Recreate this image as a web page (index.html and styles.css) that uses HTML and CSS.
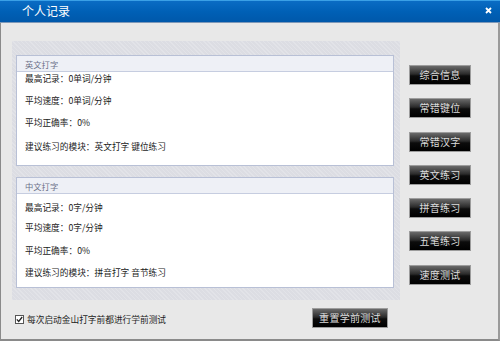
FILE: index.html
```html
<!doctype html>
<html lang="zh">
<head>
  <meta charset="utf-8">
  <title>个人记录</title>
  <link rel="stylesheet" href="styles.css">
</head>
<body>
  <div class="window">
    <div class="titlebar">
      <span class="title">个人记录</span>
      <span class="close">
        <svg width="7" height="7" viewBox="0 0 7 7"><path d="M1 1L6 6M6 1L1 6" stroke="#fff" stroke-width="1.8"/></svg>
      </span>
    </div>

    <div class="content">
      <div class="main">
        <div class="panel">
          <div class="group en">
            <div class="group-head">英文打字</div>
            <div class="group-body">
              <p>最高记录：0单词/分钟</p>
              <p>平均速度：0单词/分钟</p>
              <p>平均正确率：0%</p>
              <p>建议练习的模块：英文打字 键位练习</p>
            </div>
          </div>
          <div class="group cn">
            <div class="group-head">中文打字</div>
            <div class="group-body">
              <p>最高记录：0字/分钟</p>
              <p>平均速度：0字/分钟</p>
              <p>平均正确率：0%</p>
              <p>建议练习的模块：拼音打字 音节练习</p>
            </div>
          </div>
        </div>

        <div class="side">
          <button class="btn">综合信息</button>
          <button class="btn">常错键位</button>
          <button class="btn">常错汉字</button>
          <button class="btn">英文练习</button>
          <button class="btn">拼音练习</button>
          <button class="btn">五笔练习</button>
          <button class="btn">速度测试</button>
        </div>
      </div>

      <div class="footer">
        <label class="check">
          <span class="box">
            <svg width="7" height="7" viewBox="0 0 7 7"><path d="M0.8 3.4L2.7 5.4L6.2 1" fill="none" stroke="#222" stroke-width="1.3"/></svg>
          </span>
          每次启动金山打字前都进行学前测试
        </label>
        <button class="btn wide">重置学前测试</button>
      </div>
    </div>
  </div>
</body>
</html>
```

FILE: styles.css
```css
body {
  margin: 0;
  font-family: "Noto Sans CJK SC", "DejaVu Sans", sans-serif;
  background-color: #e8e8e8;
}
.window {
  width: 500px;
  height: 341px;
  box-sizing: border-box;
  border-left: 1px solid #8a8a8a;
  border-right: 2px solid #9a9a9a;
  border-bottom: 2px solid #8a8a8a;
  background-color: #e8e8e8;
  display: flex;
  flex-direction: column;
}
.titlebar {
  height: 23px;
  box-sizing: border-box;
  margin: 0 -2px 0 -1px;
  border-top: 1px solid #3aa0e6;
  border-bottom: 1px solid #7d98b8;
  background: linear-gradient(#0a6cc4, #0060b6 50%, #0058aa);
  display: flex;
  align-items: center;
  justify-content: space-between;
  padding: 0 8px 1px 22px;
}
.title {
  color: #fff;
  font-size: 12px;
  line-height: 14px;
}
.close {
  display: flex;
  margin-top: -1px;
}
.content {
  flex: 1;
  display: flex;
  flex-direction: column;
  padding: 18px 0 0 11px;
}
.main {
  display: flex;
  align-items: flex-start;
}
.panel {
  width: 388px;
  height: 259px;
  box-sizing: border-box;
  padding: 14px 6px 0 4px;
  background-color: #dcdde3;
  background-image: repeating-linear-gradient(45deg, rgba(255,255,255,0.18) 0 1px, transparent 1px 3px);
  display: flex;
  flex-direction: column;
  gap: 11px;
}
.group {
  height: 111px;
  box-sizing: border-box;
  border: 1px solid #b8c0d6;
  background-color: #fff;
}
.group-head {
  height: 16px;
  box-sizing: border-box;
  border-bottom: 1px solid #c6cde0;
  background-color: #eef0f6;
  color: #6b7088;
  font-size: 8.3px;
  line-height: 16px;
  padding-left: 8px;
}
.group-body {
  padding: 0 0 0 8px;
}
.group p {
  margin: 0 0 11px;
  font-size: 8.7px;
  line-height: 11px;
  color: #1a1a1a;
}
.en .group-body {
  padding-top: 1px;
}
.en p:nth-child(4) {
  margin-top: 13px;
}
.cn .group-body {
  padding-top: 8px;
}
.cn p:nth-child(2) {
  margin-top: -2px;
}
.cn p:nth-child(3) {
  margin-top: 12px;
}
.side {
  display: flex;
  flex-direction: column;
  gap: 13.3px;
  margin: 24px 0 0 9px;
}
.btn {
  width: 62px;
  height: 20px;
  box-sizing: border-box;
  padding: 0;
  border: 1px solid #9c9c9c;
  background: linear-gradient(#6a6a6a, #2a2a2a 45%, #0c0c0c 55%, #000);
  color: #dcdcdc;
  font-family: "Noto Sans CJK SC", "DejaVu Sans", sans-serif;
  font-size: 10px;
  line-height: 18px;
  letter-spacing: 0.3px;
}
.btn.wide {
  width: 76px;
}
.footer {
  display: flex;
  align-items: center;
  margin-top: 8px;
  height: 20px;
}
.check {
  display: flex;
  align-items: center;
  gap: 3px;
  width: 297px;
  padding-left: 3px;
  margin-top: 3px;
  font-size: 8.7px;
  color: #1a1a1a;
}
.box {
  width: 9px;
  height: 9px;
  box-sizing: border-box;
  border: 1px solid #555;
  background-color: #fff;
  display: flex;
  align-items: center;
  justify-content: center;
}
```
